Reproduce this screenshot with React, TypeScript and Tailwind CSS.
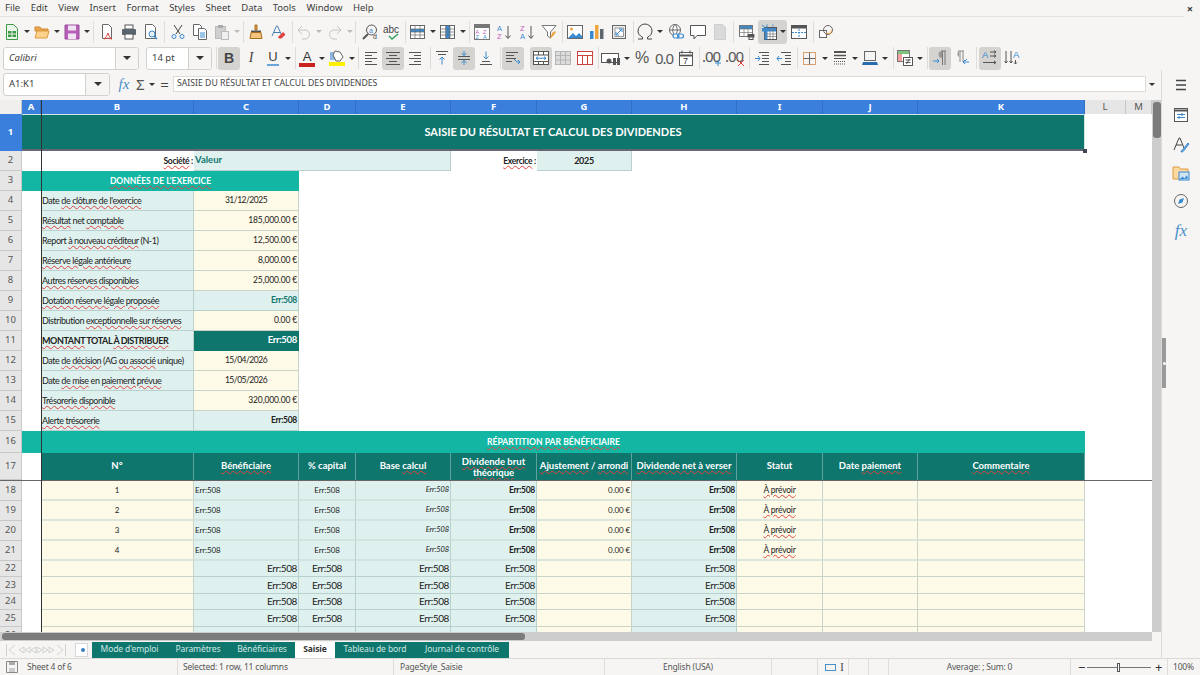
import React from "react";

const COLS = "grid grid-cols-[22px_19px_153px_105px_57px_95px_86px_95px_105px_86px_95px_167px_41px_26px]";

const U = ({ children }: { children: React.ReactNode }) => (
  <span className="underline decoration-wavy decoration-[#e0433f] decoration-1 underline-offset-[1px]">{children}</span>
);

type SP = { c?: string; active?: boolean; children?: React.ReactNode };
const Slot = ({ c = "", active, children }: SP) => (
  <div className={`w-[22px] h-[23px] shrink-0 flex items-center justify-center rounded-[3px] ${active ? "bg-[#d5d3d0]" : ""} ${c}`}>{children}</div>
);
const Ar = ({ c = "" }: { c?: string }) => (
  <div className={`w-[8px] shrink-0 flex justify-center ${c}`}>
    <div className="w-0 h-0 border-l-[3px] border-r-[3px] border-t-[3px] border-l-transparent border-r-transparent border-t-[#333]" />
  </div>
);
const Sep = ({ c = "" }: { c?: string }) => <div className={`w-px h-[22px] shrink-0 bg-[#dedcd9] ${c}`} />;

const G = ({ children, w = 16, h = 16 }: { children: React.ReactNode; w?: number; h?: number }) => (
  <svg width={w} height={h} viewBox="0 0 16 16" fill="none" strokeWidth="1">{children}</svg>
);
const DK = "#555";
const BL = "#3a8ad0";

const Lines = ({ ys, x1s, x2s, color = DK }: { ys: number[]; x1s: number[]; x2s: number[]; color?: string }) => (
  <>{ys.map((y, i) => <path key={i} d={`M${x1s[i]} ${y}H${x2s[i]}`} stroke={color} />)}</>
);

const ICONS = {
  newDoc: <G><path d="M2.5 .5h7l4 4v11h-11z" fill="#eaf5ea" stroke="#3f9a48" /><rect x="4" y="7" width="8" height="6" fill="#3f9a48" /><path d="M8 7v6M4 10h8" stroke="#eaf5ea" /></G>,
  open: <G w={18} h={16}><path d="M1 3h5l1.5 2H14v2H1z" fill="#e9a84f" stroke="#d08a30" /><path d="M1 14l2-7h12l-2 7z" fill="#fbd38d" stroke="#e09a40" /></G>,
  save: <G><path d="M1 1h14v14H1z" fill="#b65fb8" stroke="#9a4a9c" /><rect x="4" y="1.5" width="8" height="5" fill="#f2e3f2" /><rect x="4" y="9.5" width="8" height="5.5" fill="#f2e3f2" /></G>,
  pdf: <G><path d="M3.5 .5h6l3 3v11h-9z" fill="#fff" stroke="#666" /><path d="M9 9c-1 3-3 5-4 6 2-1 5-1 8 0-2-1-3-3-4-6z" stroke="#d2443c" /></G>,
  print: <G><rect x="4" y="1" width="8" height="4" fill="#fff" stroke="#555" /><rect x="1" y="5" width="14" height="6" rx="1" fill="#5b6570" /><rect x="4" y="10" width="8" height="5" fill="#fff" stroke="#555" /></G>,
  preview: <G><path d="M2.5 .5h7l3 3v11h-10z" fill="#fff" stroke="#666" /><circle cx="9" cy="10" r="3" fill="#e4f1fb" stroke={BL} /><path d="M11 12l3 3" stroke={BL} strokeWidth="1.5" /></G>,
  cut: <G><path d="M4 1l6 9M12 1l-6 9" stroke="#444" /><circle cx="4" cy="12.5" r="2" stroke={BL} /><circle cx="12" cy="12.5" r="2" stroke={BL} /></G>,
  copy: <G><path d="M1.5 .5h6l2 2v9h-8z" fill="#fff" stroke="#666" /><path d="M6.5 4.5h6l2 2v9h-8z" fill="#fff" stroke="#666" /><path d="M8 9h5M8 11h5M8 13h5" stroke={BL} /></G>,
  paste: <G><rect x="1.5" y="2.5" width="10" height="12" fill="#cfcfcf" stroke="#bbb" /><rect x="4" y="1" width="5" height="3" fill="#aaa" /><rect x="7.5" y="7.5" width="7" height="8" fill="#eee" stroke="#bbb" /></G>,
  clone: <G><path d="M7 1h2v5H7z" fill="#e9a84f" stroke="#a86f20" /><path d="M3 6.5h10v2H3z" fill="#555" /><path d="M3 8.5h10l1 6H2z" fill="#f4c47c" stroke="#a86f20" /></G>,
  clear: <G><path d="M2 12L6.5 2h1L12 12M4 8.5h6" stroke="#4a7fb5" /><path d="M8 13l5-5 2.5 2.5-4 4H9z" fill="#e0433f" /></G>,
  undo: <G><path d="M6 2L2 6l4 4" stroke="#c4c4c4" /><path d="M2 6h7a4.5 4.5 0 0 1 0 9H6" stroke="#c4c4c4" /></G>,
  redo: <G><path d="M10 2l4 4-4 4" stroke="#c4c4c4" /><path d="M14 6H7a4.5 4.5 0 0 0 0 9h3" stroke="#c4c4c4" /></G>,
  find: <G><circle cx="9.5" cy="6" r="5" stroke="#555" /><path d="M6 10l-5 5" stroke="#555" strokeWidth="2" /><text x="7" y="8.5" fontSize="7" fill={BL} fontFamily="Liberation Sans">a</text><text x="11" y="15" fontSize="7" fill="#444" fontFamily="Liberation Sans">d</text></G>,
  spell: <svg width="18" height="16" viewBox="0 0 18 16" fill="none"><text x="0" y="9" fontSize="10" fill="#444" fontFamily="Liberation Sans">abc</text><path d="M6 12l3 3 6-5" stroke="#2ea05a" strokeWidth="1.4" /></svg>,
  rows: <G><rect x=".5" y="1.5" width="14" height="13" fill="#fff" stroke="#666" /><rect x="1" y="5" width="13" height="3" fill="#3a8ad0" /><path d="M5 2v12M10 2v12M1 5h13M1 8h13M1 11h13" stroke="#666" strokeOpacity=".7" /></G>,
  cols: <G><rect x=".5" y="1.5" width="14" height="13" fill="#fff" stroke="#666" /><rect x="6" y="2" width="4" height="12" fill="#3a8ad0" /><path d="M5.5 2v12M10 2v12M1 5h13M1 8h13M1 11h13" stroke="#666" strokeOpacity=".7" /></G>,
  sort: <G><rect x=".5" y=".5" width="15" height="15" fill="#fff" stroke="#777" /><rect x="1" y="1" width="14" height="3" fill="#777" /><text x="1.5" y="9.5" fontSize="5.5" fill="#c05cc0" fontFamily="Liberation Sans">A</text><text x="9" y="9.5" fontSize="5.5" fill="#c05cc0" fontFamily="Liberation Sans">Z</text><text x="1.5" y="15" fontSize="5.5" fill={BL} fontFamily="Liberation Sans">Z</text><text x="9" y="15" fontSize="5.5" fill={BL} fontFamily="Liberation Sans">A</text></G>,
  asc: <G><text x="1" y="7" fontSize="7.5" fill={BL} fontFamily="Liberation Sans">A</text><text x="1" y="15" fontSize="7.5" fill="#c05cc0" fontFamily="Liberation Sans">Z</text><path d="M12 2v12M9.5 11.5L12 14.5l2.5-3" stroke="#555" /></G>,
  desc: <G><text x="1" y="7" fontSize="7.5" fill="#c05cc0" fontFamily="Liberation Sans">Z</text><text x="1" y="15" fontSize="7.5" fill={BL} fontFamily="Liberation Sans">A</text><path d="M12 2v12M9.5 11.5L12 14.5l2.5-3" stroke="#555" /></G>,
  filter: <G><path d="M1 1.5h14L9.5 8v6L6.5 12V8z" fill="#fff" stroke="#777" /><path d="M9 15l2-6 3-2 1 1-2 3z" fill="#eea540" /></G>,
  image: <G><rect x=".5" y="1.5" width="15" height="13" fill="#fff" stroke="#666" /><circle cx="4.5" cy="5" r="1.5" fill="#eea540" /><path d="M1 14l5-5 3 3 3-3 3 3v2z" fill={BL} /></G>,
  chart: <G><rect x="1" y="7" width="3.5" height="8" fill={BL} /><rect x="6" y="1" width="3.5" height="14" fill="#eea540" /><rect x="11" y="5" width="3.5" height="10" fill="#5c6670" /></G>,
  pivot: <G><rect x="1.5" y="1.5" width="13" height="13" fill="#eee" stroke="#666" /><rect x="4" y="4" width="8.5" height="8.5" fill="#fff" stroke="#999" /><path d="M5 11l6-6M8 5h3v3M5 8v3h3" stroke={BL} /></G>,
  omega: <svg width="18" height="18" viewBox="0 0 18 18" fill="none"><path d="M2 16h4.5v-1.8C3.8 13 2 10.8 2 8a7 7 0 0 1 14 0c0 2.8-1.8 5-4.5 6.2V16H16" stroke="#444" /></svg>,
  link: <G><circle cx="7" cy="6" r="5.5" fill="#fff" stroke="#666" /><path d="M1.5 6h11M7 .5c-3 3-3 8 0 11M7 .5c3 3 3 8 0 11" stroke="#666" /><rect x="5" y="10" width="6" height="4" rx="2" fill="#fff" stroke={BL} strokeWidth="1.2" /><rect x="9.5" y="10" width="6" height="4" rx="2" stroke={BL} strokeWidth="1.2" /></G>,
  comment: <G><path d="M.5 1.5h15v10H7l-3 3.5v-3.5H.5z" fill="#fff" stroke="#555" /></G>,
  header: <G><path d="M2.5 .5h8l3 3v12h-11z" fill="#d9d9d9" stroke="#cfcfcf" /></G>,
  printArea: <G><rect x=".5" y="1.5" width="13" height="11" fill="#fff" stroke="#777" /><rect x="1" y="2" width="12" height="3" fill="#3a8ad0" /><path d="M5 2v10M9 2v10M1 5h12M1 8.5h12" stroke="#777" strokeOpacity=".7" /><rect x="8.5" y="10" width="7" height="3.5" rx="1" fill="#555" /><rect x="10" y="13" width="4" height="2.5" fill="#fff" stroke="#555" /></G>,
  freeze: <G><rect x="3.5" y="3.5" width="12" height="12" fill="#fff" stroke="#555" /><rect x="1" y="4" width="14" height="3.5" fill={BL} /><rect x="3.5" y="4" width="3" height="11.5" fill={BL} /><path d="M9 4v11M12 4v11M4 10h11M4 12.5h11" stroke="#777" strokeOpacity=".7" /><path d="M1 1l3 2.5M6 .5v3M12 .5v2" stroke={BL} /></G>,
  split: <G><rect x=".5" y="1.5" width="15" height="13" fill="#fff" stroke="#555" /><rect x="1" y="2" width="14" height="2.5" fill="#555" /><path d="M1 8.5h14M8 5v9" stroke={BL} strokeDasharray="2 1" /></G>,
  draw: <G><rect x="1.5" y="6.5" width="7" height="7" fill="#fff" stroke="#666" /><circle cx="10" cy="6" r="4.5" stroke="#666" /><path d="M8 9l4 1 2-4" stroke="#eea540" /></G>,
  italicI: <span className="italic text-[14px] text-[#444] font-['Liberation_Serif',serif] leading-none">I</span>,
  bold: <span className="font-bold text-[14px] text-[#444] font-['Liberation_Sans',sans-serif] leading-none">B</span>,
  under: <span className="text-[13px] text-[#444] leading-none font-['Liberation_Sans',sans-serif] border-b-2 border-[#6aa5dc] px-[1px] pb-[1px]">U</span>,
  fontColor: <div className="flex flex-col items-center w-[16px]"><span className="text-[13px] leading-[13px] text-[#333] font-['Liberation_Sans',sans-serif]">A</span><div className="w-[16px] h-[4px] bg-[#c9211e]" /></div>,
  highlight: <G><path d="M1 2h6v8H1z" fill="#4a90d0" opacity=".6" /><path d="M6 1l5 1 3 5-3 4H7L4 5z" fill="#fff" stroke="#666" /><rect x="0" y="12" width="16" height="4" fill="#ffef00" /></G>,
  alignL: <G><Lines ys={[2.5, 5.5, 8.5, 11.5, 14.5]} x1s={[2, 2, 2, 2, 2]} x2s={[14, 9, 14, 9, 14]} /></G>,
  alignC: <G><Lines ys={[2.5, 5.5, 8.5, 11.5, 14.5]} x1s={[1, 4, 1, 4, 1]} x2s={[15, 12, 15, 12, 15]} /></G>,
  alignR: <G><Lines ys={[2.5, 5.5, 8.5, 11.5, 14.5]} x1s={[2, 7, 2, 7, 2]} x2s={[14, 14, 14, 14, 14]} /></G>,
  vTop: <G><path d="M2 1.5h12M4 4.5h8" stroke={DK} /><path d="M8 14.5V7M5.5 9.5L8 7l2.5 2.5" stroke={BL} /></G>,
  vMid: <G><path d="M2 6.5h12M2 9.5h12" stroke={DK} /><path d="M8 1v4.5M5.5 3L8 5.5 10.5 3M8 15v-4.5M5.5 13L8 10.5l2.5 2.5" stroke={BL} /></G>,
  vBot: <G><path d="M4 11.5h8M2 14.5h12" stroke={DK} /><path d="M8 1.5V9M5.5 6.5L8 9l2.5-2.5" stroke={BL} /></G>,
  wrap: <G><path d="M1 2.5h12M1 5.5h8M1 8.5h10M1 11.5h6" stroke={DK} /><path d="M9 9l3 3h3l-2-2M15 12l-2 2" stroke={BL} /></G>,
  merge: <G><rect x=".5" y="1.5" width="15" height="13" fill="#fff" stroke="#555" /><path d="M1 5h14M1 11.5h14M5.5 2v3M10.5 2v3M5.5 11.5v3M10.5 11.5v3" stroke="#555" /><path d="M3 8.2h10M3 8.2l2-1.5M3 8.2l2 1.5M13 8.2l-2-1.5M13 8.2l-2 1.5" stroke={BL} /></G>,
  mergeDis: <G><rect x=".5" y="1.5" width="15" height="13" fill="#ddd" stroke="#b5b5b5" /><path d="M1 5.5h14M1 10h14M5.5 2v12M10.5 2v12" stroke="#b5b5b5" /></G>,
  unmerge: <G><rect x=".5" y="1.5" width="15" height="13" fill="#fff" stroke="#c9443c" /><path d="M1 5.5h14M5.5 5v9M10.5 5v9" stroke="#c9443c" /></G>,
  currency: <svg width="22" height="16" viewBox="0 0 22 16" fill="none"><rect x=".5" y="3.5" width="17" height="9" fill="#fff" stroke="#555" /><circle cx="8" cy="11" r="2.5" fill="#555" /><rect x="12" y="8" width="3" height="7" fill="#555" /><rect x="16" y="8" width="3" height="7" fill="#555" /></svg>,
  percent: <span className="text-[16px] text-[#555] font-['Liberation_Sans',sans-serif] leading-none">%</span>,
  num: <span className="text-[15px] text-[#555] font-['Noto_Sans',sans-serif] leading-none tracking-[-1px]">0.0</span>,
  date: <G><rect x="1.5" y="2.5" width="13" height="13" fill="#fff" stroke="#555" /><path d="M1 5.5h14" stroke="#555" strokeWidth="2" /><path d="M4 .5v3M12 .5v3" stroke="#555" /><text x="5" y="14" fontSize="9" fill="#333" fontFamily="Liberation Sans">7</text></G>,
  addDec: <div className="relative w-[20px] h-[18px]"><span className="block text-[15px] text-[#555] leading-[14px] tracking-[-1px] font-['Noto_Sans',sans-serif]">.00</span><svg className="absolute right-0 bottom-0" width="8" height="8" viewBox="0 0 8 8"><path d="M4 1v6M1 4h6" stroke={BL} /></svg></div>,
  delDec: <div className="relative w-[20px] h-[18px]"><span className="block text-[15px] text-[#555] leading-[14px] tracking-[-1px] font-['Noto_Sans',sans-serif]">.00</span><svg className="absolute right-0 bottom-0" width="8" height="8" viewBox="0 0 8 8"><path d="M1 1l6 6M7 1L1 7" stroke="#d9443c" /></svg></div>,
  incInd: <G><path d="M5 2.5h10M8 5.5h7M8 8.5h7M8 11.5h7M5 14.5h10" stroke={DK} /><path d="M1 8.5h5M4 6l2 2.5L4 11" stroke={BL} /></G>,
  decInd: <G><path d="M5 2.5h10M9 5.5h6M9 8.5h6M9 11.5h6M5 14.5h10" stroke={DK} /><path d="M6 8.5H1M3 6L1 8.5 3 11" stroke={BL} /></G>,
  borders: <G><rect x="2.5" y="2.5" width="12" height="12" stroke="#d9a070" /><path d="M8.5 2.5v12M2.5 8.5h12" stroke="#666" /></G>,
  bStyle: <G><path d="M2 2h12" stroke="#555" strokeWidth="2" /><path d="M2 5.5h12" stroke="#555" strokeWidth="1.5" /><path d="M2 8.5h12" stroke="#555" /><path d="M2 11.5h12M2 14h12" stroke="#555" strokeDasharray="1 1" /></G>,
  bColor: <svg width="18" height="16" viewBox="0 0 18 16" fill="none"><rect x="3.5" y="1.5" width="11" height="9" fill="#f5f5f5" stroke="#666" /><path d="M1 15l1-3h14l1 3z" fill="#2a6cb0" /></svg>,
  cond: <G><rect x=".5" y=".5" width="12" height="11" fill="#fff" stroke="#777" /><rect x="1" y="1" width="11" height="3" fill="#7cc47c" /><rect x="1" y="4" width="4" height="7" fill="#f2a0a0" /><rect x="6.5" y="7.5" width="9" height="8" fill="#fff" stroke="#555" /><path d="M8.5 10h5M8.5 12.5h5M12.5 9l-3 5" stroke="#555" /></G>,
  ltr: <G><path d="M9 1h5M10.5 1v14M13 1v14" stroke="#777" /><path d="M10 1a3.5 3.5 0 0 0 0 7z" fill="#999" /><path d="M1 11h6M5 9l2 2-2 2" stroke={BL} /></G>,
  rtl: <G><path d="M4 1h6M6 1v11M9 1v11" stroke="#888" /><path d="M5 1a3.5 3.5 0 0 0 0 6z" fill="#999" /><path d="M9 12h6M11 10l-2 2 2 2M13 9l-2 2" stroke={BL} /></G>,
  txtLtr: <G><text x="0" y="8" fontSize="9.5" fill={BL} fontFamily="Liberation Sans">A</text><path d="M8 2h6M12 .5l2 1.5-2 1.5M8 6h6M12 4.5l2 1.5-2 1.5M1 12.5h13M12 11l2 1.5-2 1.5" stroke="#555" /></G>,
  txtVert: <G><path d="M2 1v12M.5 11L2 13l1.5-2M7 1v12M5.5 11L7 13l1.5-2" stroke="#555" /><text x="9" y="8" fontSize="9.5" fill={BL} fontFamily="Liberation Sans">A</text><path d="M11.5 10v4M10 12.5l1.5 1.5 1.5-1.5" stroke="#555" /></G>,
};

function Menu() {
  const items = ["File", "Edit", "View", "Insert", "Format", "Styles", "Sheet", "Data", "Tools", "Window", "Help"];
  return (
    <div className="h-[17px] flex items-center pl-[5px] gap-[10.5px] text-[9.5px] text-[#3d3d3d] border-b border-[#e4e2df] mr-[16px] font-['Noto_Sans',sans-serif]">
      {items.map((m) => <span key={m}>{m}</span>)}
      <span className="ml-auto mr-[-9px] text-[11px] font-bold leading-none">×</span>
    </div>
  );
}

function StdBar() {
  return (
    <div className="h-[29px] flex items-center pl-px">
      <Slot>{ICONS.newDoc}</Slot><Ar />
      <Slot>{ICONS.open}</Slot><Ar />
      <Slot>{ICONS.save}</Slot><Ar />
      <Sep c="ml-[2px]" />
      <Slot c="ml-[2px]">{ICONS.pdf}</Slot><Slot>{ICONS.print}</Slot><Slot>{ICONS.preview}</Slot>
      <Sep c="ml-[2px]" />
      <Slot c="ml-[2px]">{ICONS.cut}</Slot><Slot>{ICONS.copy}</Slot><Slot>{ICONS.paste}</Slot><Ar c="opacity-30" />
      <Sep c="ml-[2px]" />
      <Slot c="ml-px">{ICONS.clone}</Slot><Slot>{ICONS.clear}</Slot>
      <Sep c="ml-[3px]" />
      <Slot>{ICONS.undo}</Slot><Ar c="opacity-30" /><Slot c="ml-px">{ICONS.redo}</Slot><Ar c="opacity-30" />
      <Sep c="ml-px" />
      <Slot c="ml-[3px]">{ICONS.find}</Slot><Slot>{ICONS.spell}</Slot>
      <Sep c="ml-[2px]" />
      <Slot c="ml-px">{ICONS.rows}</Slot><Ar /><Slot>{ICONS.cols}</Slot><Ar />
      <Sep c="ml-[2px]" />
      <Slot c="ml-px">{ICONS.sort}</Slot><Slot>{ICONS.asc}</Slot><Slot c="ml-px">{ICONS.desc}</Slot><Slot>{ICONS.filter}</Slot>
      <Sep c="ml-[2px]" />
      <Slot c="ml-px">{ICONS.image}</Slot><Slot>{ICONS.chart}</Slot><Slot>{ICONS.pivot}</Slot>
      <Sep c="ml-[3px]" />
      <Slot>{ICONS.omega}</Slot><Ar /><Slot c="ml-px">{ICONS.link}</Slot><Slot>{ICONS.comment}</Slot><Slot>{ICONS.header}</Slot>
      <Sep c="ml-[2px]" />
      <Slot c="ml-[2px]">{ICONS.printArea}</Slot>
      <div className="w-[29px] h-[24px] shrink-0 rounded-[3px] bg-[#d5d3d0] flex items-center pl-[3px]">{ICONS.freeze}<Ar c="ml-[2px]" /></div>
      <Slot c="ml-px">{ICONS.split}</Slot>
      <Sep c="ml-[3px]" />
      <Slot c="ml-px">{ICONS.draw}</Slot>
    </div>
  );
}

const Combo = ({ w, split, text, italic }: { w: string; split: string; text: string; italic?: boolean }) => (
  <div className={`${w} h-[23px] shrink-0 flex border border-[#d3d1ce] rounded-[3px] bg-white overflow-hidden text-[9.5px] text-[#3d3d3d]`}>
    <div className={`flex-1 flex items-center pl-[5px] ${italic ? "italic" : ""}`}>{text}</div>
    <div className={`${split} bg-[#f6f5f4] border-l border-[#d3d1ce] flex items-center justify-center`}>
      <div className="w-0 h-0 border-l-[4px] border-r-[4px] border-t-[4px] border-l-transparent border-r-transparent border-t-[#333]" />
    </div>
  </div>
);

function FmtBar() {
  return (
    <div className="h-[24px] flex items-center pl-[3px] font-['Noto_Sans',sans-serif]">
      <Combo w="w-[136px]" split="w-[23px]" text="Calibri" italic />
      <Combo w="w-[66px] ml-[7px]" split="w-[23px]" text="14 pt" />
      <Sep c="ml-[4px]" />
      <Slot c="ml-px" active>{ICONS.bold}</Slot><Slot>{ICONS.italicI}</Slot><Slot>{ICONS.under}</Slot><Ar />
      <Sep c="ml-[3px]" />
      <Slot>{ICONS.fontColor}</Slot><Ar /><Slot>{ICONS.highlight}</Slot><Ar />
      <Sep c="ml-[2px]" />
      <Slot c="ml-px">{ICONS.alignL}</Slot><Slot active>{ICONS.alignC}</Slot><Slot>{ICONS.alignR}</Slot>
      <Sep c="ml-[4px]" />
      <Slot>{ICONS.vTop}</Slot><Slot active>{ICONS.vMid}</Slot><Slot>{ICONS.vBot}</Slot>
      <Sep c="ml-[3px]" />
      <Slot c="ml-px" active>{ICONS.wrap}</Slot><Slot c="ml-[6px]" active>{ICONS.merge}</Slot><Slot>{ICONS.mergeDis}</Slot><Slot>{ICONS.unmerge}</Slot>
      <Sep c="ml-[2px]" />
      <Slot c="ml-[2px]">{ICONS.currency}</Slot><Ar /><Slot>{ICONS.percent}</Slot><Slot>{ICONS.num}</Slot><Slot>{ICONS.date}</Slot>
      <Sep c="ml-[2px]" />
      <Slot c="ml-px">{ICONS.addDec}</Slot><Slot c="ml-px">{ICONS.delDec}</Slot>
      <Sep c="ml-[3px]" />
      <Slot c="ml-px">{ICONS.incInd}</Slot><Slot>{ICONS.decInd}</Slot>
      <Sep c="ml-[2px]" />
      <Slot>{ICONS.borders}</Slot><Ar c="ml-px" /><Slot>{ICONS.bStyle}</Slot><Ar /><Slot>{ICONS.bColor}</Slot><Ar />
      <Sep c="ml-[4px]" />
      <Slot>{ICONS.cond}</Slot><Ar />
      <Sep c="ml-[3px]" />
      <Slot c="ml-px" active>{ICONS.ltr}</Slot><Slot>{ICONS.rtl}</Slot>
      <Sep c="ml-[3px]" />
      <Slot c="ml-[2px]" active>{ICONS.txtLtr}</Slot><Slot>{ICONS.txtVert}</Slot>
    </div>
  );
}

function FormulaBar() {
  return (
    <div className="h-[30px] flex items-center pl-[3px] pb-[2px] font-['Noto_Sans',sans-serif]">
      <Combo w="w-[107px]" split="w-[24px]" text="A1:K1" />
      <span className="w-[24px] ml-[2px] text-center text-[15px] italic text-[#4a90c8] font-['Liberation_Serif',serif] leading-none">fx</span>
      <span className="w-[8px] text-center text-[15px] text-[#555] leading-none">Σ</span>
      <Ar c="ml-[4px]" />
      <span className="w-[17px] text-center text-[15px] text-[#444] leading-none">=</span>
      <div className="h-[16px] w-[973px] bg-white border border-[#dedcd9] flex items-center pl-[3px] text-[8.7px] text-[#444]">SAISIE DU RÉSULTAT ET CALCUL DES DIVIDENDES</div>
      <Ar c="ml-[2px]" />
    </div>
  );
}

const RH = ({ n, sel }: { n: number; sel?: boolean }) => (
  <div className={`border-r border-b flex items-center justify-center text-[9.5px] tracking-normal font-['Noto_Sans',sans-serif] ${sel ? "bg-[#3a7fdc] border-[#3a7fdc] text-white font-bold" : "bg-[#e6e6e6] border-[#c8c8c8] text-[#555]"}`}>{n}</div>
);
const CAL = "bg-[#dff1ef] border-r border-b border-[#b9d0cc]";
const INP = "bg-[#fefae8] border-r border-b border-[#c9d3c8]";
const CAL2 = "bg-[#dff1ef] border-r border-[#b9d0cc] border-b-2 border-b-[#d3e4e0]";
const INP2 = "bg-[#fefae8] border-r border-[#c9d3c8] border-b-2 border-b-[#dde6dc]";
const CELL = "flex items-center overflow-hidden whitespace-nowrap px-px";

function Labels() {
  const NUM = "text-[8.5px] tracking-[-0.15px] justify-end";
  const DT = "text-[8.5px] tracking-[-0.5px] justify-center";
  const BE = "text-[8.5px] font-bold justify-end";
  const rows: [number, React.ReactNode, string, string, string][] = [
    [4, <>Date <U>de clôture de l'exercice</U></>, "31/12/2025", INP, DT],
    [5, <><U>Résultat</U> net <U>comptable</U></>, "185,000.00 €", INP, NUM],
    [6, <>Report <U>à nouveau créditeur</U> (N-1)</>, "12,500.00 €", INP, NUM],
    [7, <><U>Réserve légale antérieure</U></>, "8,000.00 €", INP, NUM],
    [8, <><U>Autres réserves disponibles</U></>, "25,000.00 €", INP, NUM],
    [9, <><U>Dotation réserve légale proposée</U></>, "Err:508", CAL, `${BE} text-[#0f766e]`],
    [10, <>Distribution <U>exceptionnelle sur réserves</U></>, "0.00 €", INP, NUM],
    [11, <span className="font-bold"><U>MONTANT</U> TOTAL <U>À DISTRIBUER</U></span>, "Err:508", "bg-[#0f766e] border-r border-b border-[#0f766e]", "justify-end font-bold text-white text-[9.5px]"],
    [12, <>Date <U>de décision</U> (AG <U>ou associé</U> unique)</>, "15/04/2026", INP, DT],
    [13, <>Date <U>de mise</U> en <U>paiement prévue</U></>, "15/05/2026", INP, DT],
    [14, <><U>Trésorerie disponible</U></>, "320,000.00 €", INP, NUM],
    [15, <><U>Alerte trésorerie</U></>, "Err:508", CAL, BE],
  ];
  return (
    <>
      {rows.map(([n, label, val, bg, cls]) => (
        <div key={n} className={`${COLS} h-[20px]`}>
          <RH n={n} />
          <div className="bg-white" />
          <div className={`${CAL} ${CELL}`}><span className="tracking-[-0.42px]">{label}</span></div>
          <div className={`${bg} ${CELL} ${cls}`}>{val}</div>
        </div>
      ))}
    </>
  );
}

function Table() {
  const heads: React.ReactNode[] = [
    "N°", <U>Bénéficiaire</U>, "% capital", <>Base <U>calcul</U></>,
    <span className="leading-[11px] block"><U>Dividende brut</U><br /><U>théorique</U></span>,
    <><U>Ajustement</U> / <U>arrondi</U></>, <><U>Dividende net à verser</U></>, "Statut", <>Date <U>paiement</U></>, <U>Commentaire</U>,
  ];
  const short = [[18, 1], [19, 2], [20, 3], [21, 4]];
  const E = "Err:508";
  return (
    <>
      <div className={`${COLS} h-[28px] border-b border-[#666]`}>
        <RH n={17} />
        <div className="bg-white" />
        {heads.map((h, i) => (
          <div key={i} className="bg-[#0f766e] border-r border-[#5ea39b] flex items-center justify-center text-center text-white font-bold text-[9.5px] tracking-normal overflow-hidden whitespace-nowrap"><span>{h}</span></div>
        ))}
      </div>
      {short.map(([n, v]) => (
        <div key={n} className={`${COLS} h-[20px] text-[8px] tracking-[-0.1px]`}>
          <RH n={n} />
          <div className="bg-white" />
          <div className={`${INP2} ${CELL} justify-center`}>{v}</div>
          <div className={`${CAL2} ${CELL}`}>{E}</div>
          <div className={`${CAL2} ${CELL} justify-center`}>{E}</div>
          <div className={`${CAL2} ${CELL} justify-end italic text-[7.5px]`}>{E}</div>
          <div className={`${CAL2} ${CELL} justify-end font-bold text-[8.5px] tracking-[-0.3px]`}>{E}</div>
          <div className={`${INP2} ${CELL} justify-end`}>0.00 €</div>
          <div className={`${CAL2} ${CELL} justify-end font-bold text-[8.5px] tracking-[-0.3px]`}>{E}</div>
          <div className={`${INP2} ${CELL} justify-center text-[8.5px] tracking-[-0.2px]`}><U>À prévoir</U></div>
          <div className={INP2} />
          <div className={INP2} />
        </div>
      ))}
      {([[22, "h-[16px]"], [23, "h-[17px]"], [24, "h-[16px]"], [25, "h-[17px]"], [26, "h-[17px]"]] as [number, string][]).map(([n, h]) => (
        <div key={n} className={`${COLS} ${h} text-[10px] tracking-[-0.4px]`}>
          <RH n={n} />
          <div className="bg-white" />
          <div className={INP} />
          <div className={`${CAL} ${CELL} justify-end`}>{E}</div>
          <div className={`${CAL} ${CELL} justify-center`}>{E}</div>
          <div className={`${CAL} ${CELL} justify-end`}>{E}</div>
          <div className={`${CAL} ${CELL} justify-end`}>{E}</div>
          <div className={INP} />
          <div className={`${CAL} ${CELL} justify-end`}>{E}</div>
          <div className={INP} />
          <div className={INP} />
          <div className={INP} />
        </div>
      ))}
    </>
  );
}

function Sheet() {
  const cols = ["A", "B", "C", "D", "E", "F", "G", "H", "I", "J", "K"];
  return (
    <div className="relative w-[1152px] h-[532px] overflow-hidden bg-white font-['Lato',sans-serif] text-[9px] tracking-[-0.3px] text-[#222]">
      <div className={`${COLS} h-[14px] text-[9.5px] tracking-normal font-['Noto_Sans',sans-serif]`}>
        <div className="bg-[#f0efed] border-r border-[#c8c8c8]" />
        {cols.map((c) => <div key={c} className="bg-[#3a7fdc] border-r border-[#2f6fc6] text-white font-bold flex items-center justify-center leading-none">{c}</div>)}
        {["L", "M"].map((c) => <div key={c} className="bg-[#e6e6e6] border-r border-[#c8c8c8] text-[#555] flex items-center justify-center leading-none">{c}</div>)}
      </div>
      <div className={`${COLS} h-[37px]`}>
        <RH n={1} sel />
        <div className="col-span-11 bg-[#0f766e] border-t border-r border-[#cfe8e4] border-b-2 border-b-[#667] flex items-center justify-center text-white font-bold text-[11px] tracking-normal">SAISIE DU RÉSULTAT ET CALCUL DES DIVIDENDES</div>
      </div>
      <div className={`${COLS} h-[20px]`}>
        <RH n={2} />
        <div className="bg-white" />
        <div className={`${CELL} justify-end font-bold text-[8.5px]`}><span><U>Société</U> :</span></div>
        <div className={`col-span-3 ${CAL} ${CELL} font-bold text-[#0f766e] text-[9.5px] tracking-normal pl-px`}>Valeur</div>
        <div className={`${CELL} justify-end font-bold text-[8.5px]`}><span><U>Exercice</U> :</span></div>
        <div className={`${CAL} ${CELL} justify-center font-bold`}>2025</div>
      </div>
      <div className={`${COLS} h-[20px]`}>
        <RH n={3} />
        <div className="col-span-3 bg-[#13b5a3] flex items-center justify-center text-white font-bold text-[8.5px] tracking-normal"><U>DONNÉES DE L'EXERCICE</U></div>
      </div>
      <Labels />
      <div className={`${COLS} h-[22px]`}>
        <RH n={16} />
        <div className="col-span-11 bg-[#13b5a3] flex items-center justify-center text-white font-bold text-[8.6px] tracking-normal"><U>RÉPARTITION PAR BÉNÉFICIAIRE</U></div>
      </div>
      <Table />
      <div className="absolute left-[41px] top-0 bottom-0 w-px bg-[#333]" />
      <div className="absolute left-[1083px] top-[49px] w-[4px] h-[4px] bg-[#445]" />
    </div>
  );
}

function VScroll() {
  return (
    <div className="w-[10px] h-[532px] bg-[#cdcdcd] pt-[2px] px-[1px]">
      <div className="h-[36px] rounded-[3px] bg-[#7b7b7b]" />
    </div>
  );
}

function Tabs() {
  const TXT = "flex items-center justify-center tracking-[-0.1px]";
  return (
    <div className="h-[17px] flex items-center text-[8.5px] font-['Noto_Sans',sans-serif] w-[1161px]">
      <svg className="ml-[6px]" width="60" height="12" viewBox="0 0 60 12" fill="none" stroke="#d2d2d2">
        <path d="M.5 0v12M9 1L3 6l6 5M18 3l-5 3 5 3v-6M24 3l-5 3 5 3zM30 3l-5 3 5 3zM31 3l5 3-5 3zM37 3l5 3-5 3zM43 3l5 3-5 3zM51 1l6 5-6 5M59.5 0v12" />
      </svg>
      <div className="w-[13px] h-[14px] ml-[9px] bg-white border border-[#d8d8d8] flex items-center justify-end pr-[2px]"><div className="w-[4px] h-[4px] rounded-full bg-[#3a7fc0]" /></div>
      <div className="ml-[4px] flex h-[16px] bg-[#0f766e] text-[#cfe6e2]">
        <div className={`${TXT} w-[75px]`}>Mode d'emploi</div>
        <div className={`${TXT} w-[62px]`}>Paramètres</div>
        <div className={`${TXT} w-[66px]`}>Bénéficiaires</div>
        <div className={`${TXT} w-[40px] bg-white text-[#333] font-bold`}>Saisie</div>
        <div className={`${TXT} w-[80px]`}>Tableau de bord</div>
        <div className={`${TXT} w-[94px]`}>Journal de contrôle</div>
      </div>
    </div>
  );
}

function Sidebar() {
  return (
    <div className="w-[39px] h-[588px] relative border-l border-[#dcdad7] flex flex-col items-center pt-[7px] -ml-px">
      <svg width="16" height="16" viewBox="0 0 16 16"><path d="M3 3.5h10M3 8h10M3 12.5h10" stroke="#444" strokeWidth="1.3" /></svg>
      <svg className="mt-[12px]" width="20" height="20" viewBox="0 0 20 20" fill="none"><rect x="3.5" y="3.5" width="13" height="13" fill="#fff" stroke="#555" /><path d="M3.5 5.5h13" stroke="#555" strokeWidth="2" /><path d="M6 9.5h8M6 12.5h8M11 8v3M8 11v3" stroke={BL} /></svg>
      <svg className="mt-[10px]" width="20" height="20" viewBox="0 0 20 20" fill="none"><path d="M3 15L8 3h1l4 10M5 10h6" stroke="#444" /><path d="M10 17c0-2 2-2 3-4l4-5 1 1-4 5c-1 2-2 3-4 3z" fill="#6fa8dc" stroke={BL} /></svg>
      <svg className="mt-[8px]" width="20" height="20" viewBox="0 0 20 20" fill="none"><path d="M2 4h6l1.5 2H17v10H2z" fill="#fbd9a0" stroke="#e09a40" /><rect x="8" y="9" width="10" height="8" fill="#cfe4f5" stroke={BL} /><path d="M8.5 16.5l3-3 2 2 2-3 2 3" fill="#3a8ad0" /></svg>
      <svg className="mt-[8px]" width="20" height="20" viewBox="0 0 20 20" fill="none"><circle cx="10" cy="10" r="6.5" stroke="#666" /><path d="M13 7l-1.5 4.5L7 13l1.5-4.5z" fill={BL} /></svg>
      <span className="mt-[11px] text-[17px] italic text-[#4a90c8] font-['Liberation_Serif',serif] leading-none">fx</span>
      <div className="absolute left-0 top-[268px] w-[4px] h-[50px] bg-[#9a9a9a] flex items-center justify-center"><div className="w-[3px] h-[3px] rounded-full bg-white" /></div>
    </div>
  );
}

function Status() {
  const Cell = ({ c, children }: { c: string; children?: React.ReactNode }) => (
    <div className={`h-full flex items-center border-r border-[#e0dedb] overflow-hidden whitespace-nowrap ${c}`}>{children}</div>
  );
  return (
    <div className="h-[17px] flex items-center border-t border-[#dcdad7] text-[8.5px] tracking-[-0.2px] text-[#555] font-['Noto_Sans',sans-serif]">
      <Cell c="w-[178px] pl-[6px] gap-[9px]">
        <svg width="12" height="12" viewBox="0 0 12 12" fill="none"><path d="M.5.5h11v11H.5z" stroke="#888" /><rect x="3" y="1" width="6" height="3" fill="#aaa" /><rect x="3" y="7" width="6" height="4" fill="#ccc" /></svg>
        <span>Sheet 4 of 6</span>
      </Cell>
      <Cell c="w-[216px] pl-[5px]">Selected: 1 row, 11 columns</Cell>
      <Cell c="w-[211px] pl-[6px]">PageStyle_Saisie</Cell>
      <Cell c="w-[167px] justify-center">English (USA)</Cell>
      <Cell c="w-[46px]" />
      <Cell c="w-[31px] gap-[4px] pl-[7px]">
        <div className="w-[11px] h-[7px] border border-[#4a90c8] shrink-0" />
        <span className="text-[#555] text-[12px] leading-none font-['Liberation_Serif',serif]">I</span>
      </Cell>
      <Cell c="w-[20px]" />
      <Cell c="w-[20px]" />
      <Cell c="w-[182px] justify-center">Average: ; Sum: 0</Cell>
      <div className="w-[97px] h-full flex items-center border-r border-[#e0dedb] pl-[7px]">
        <span className="text-[13px] leading-none w-[8px] text-[#333]">−</span>
        <div className="relative w-[64px] h-px bg-[#777] ml-[1px] mr-[4px]"><div className="absolute left-[30px] top-[-4px] w-[3px] h-[9px] bg-white border border-[#555]" /></div>
        <span className="text-[13px] leading-none text-[#333]">+</span>
      </div>
      <span className="pl-[5px]">100%</span>
    </div>
  );
}

export default function App() {
  return (
    <div className="w-[1200px] h-[675px] overflow-hidden bg-[#f6f5f4] flex flex-col font-['Noto_Sans',sans-serif]">
      <Menu />
      <StdBar />
      <FmtBar />
      <div className="flex h-[588px]">
        <div className="w-[1162px] flex flex-col">
          <FormulaBar />
          <div className="flex">
            <Sheet />
            <VScroll />
          </div>
          <div className="h-[9px] w-[1152px] bg-[#cdcdcd] px-[2px] pt-px"><div className="h-[7px] w-[523px] rounded-[3px] bg-[#7b7b7b]" /></div>
          <Tabs />
        </div>
        <Sidebar />
      </div>
      <Status />
    </div>
  );
}
